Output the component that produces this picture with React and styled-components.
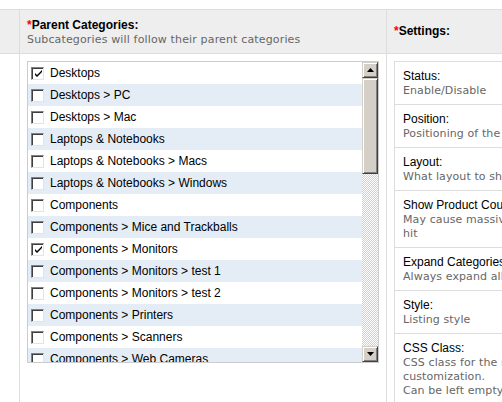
import React from 'react'
import { styled, createGlobalStyle } from 'styled-components'

const GlobalStyle = createGlobalStyle`
  html, body {
    margin: 0;
    padding: 0;
    background: #fff;
    overflow: hidden;
  }
  body {
    font-family: "Liberation Sans", Arial, sans-serif;
    font-size: 12px;
    color: #000;
  }
`

const categories = [
  { name: 'Desktops', checked: true },
  { name: 'Desktops > PC' },
  { name: 'Desktops > Mac' },
  { name: 'Laptops & Notebooks' },
  { name: 'Laptops & Notebooks > Macs' },
  { name: 'Laptops & Notebooks > Windows' },
  { name: 'Components' },
  { name: 'Components > Mice and Trackballs' },
  { name: 'Components > Monitors', checked: true },
  { name: 'Components > Monitors > test 1' },
  { name: 'Components > Monitors > test 2' },
  { name: 'Components > Printers' },
  { name: 'Components > Scanners' },
  { name: 'Components > Web Cameras' },
]

const settings = [
  { label: 'Status:', help: ['Enable/Disable'] },
  { label: 'Position:', help: ['Positioning of the module'] },
  { label: 'Layout:', help: ['What layout to show the module on'] },
  { label: 'Show Product Count:', help: ['May cause massive performance', 'hit'] },
  { label: 'Expand Categories:', help: ['Always expand all categories'] },
  { label: 'Style:', help: ['Listing style'] },
  { label: 'CSS Class:', help: ['CSS class for the module', 'customization.', 'Can be left empty'] },
]

const App = () => {
  return (<>
    <GlobalStyle />
    <Page>
      <Table>
        <HeadCell />
        <HeadCell>
          <Title><Star>*</Star>Parent Categories:</Title>
          <Sub>Subcategories will follow their parent categories</Sub>
        </HeadCell>
        <HeadCell center>
          <Title><Star>*</Star>Settings:</Title>
        </HeadCell>

        <BodyCell />
        <BodyCell>
          <ListBox>
            <Rows>
              {categories.map((c, i) => (
                <Row key={c.name} odd={i % 2 === 1}>
                  <Check>
                    {c.checked && (
                      <svg width="9" height="9" viewBox="0 0 9 9">
                        <path d="M1 4 L3 6 L8 1 L8 3 L3 8 L1 6 Z" fill="#000" />
                      </svg>
                    )}
                  </Check>
                  <span>{c.name}</span>
                </Row>
              ))}
            </Rows>
            <ScrollBar>
              <ScrollButton>
                <svg width="7" height="4" viewBox="0 0 7 4"><path d="M3.5 0 L7 4 L0 4 Z" fill="#000" /></svg>
              </ScrollButton>
              <Thumb />
              <Track />
              <ScrollButton>
                <svg width="7" height="4" viewBox="0 0 7 4"><path d="M0 0 L7 0 L3.5 4 Z" fill="#000" /></svg>
              </ScrollButton>
            </ScrollBar>
          </ListBox>
        </BodyCell>
        <BodyCell>
          <SettingsBox>
            {settings.map((s) => (
              <SettingRow key={s.label}>
                <Label>{s.label}</Label>
                {s.help.map((h) => <Help key={h}>{h}</Help>)}
              </SettingRow>
            ))}
          </SettingsBox>
        </BodyCell>
      </Table>
    </Page>
  </>)
}

const Page = styled.div`
  width: 502px;
  height: 402px;
  padding-top: 9px;
  box-sizing: border-box;
  overflow: hidden;
`

const Table = styled.div`
  display: grid;
  grid-template-columns: 20px 367px 200px;
  grid-template-rows: 44px 360px;
  border-top: 1px solid #ddd;
  width: 600px;
`

const HeadCell = styled.div`
  background: #eee;
  border-right: 1px solid #ddd;
  border-bottom: 1px solid #ddd;
  padding: 7px 7px 0;
  display: flex;
  flex-direction: column;
  justify-content: ${(p) => (p.center ? 'center' : 'flex-start')};
  ${(p) => p.center && 'padding-top: 0; padding-bottom: 2px;'}
  &:first-child { padding: 0; }
`

const Title = styled.div`
  font-weight: bold;
  font-size: 12px;
  line-height: 16px;
  color: #000;
`

const Star = styled.span`
  color: #f00;
  font-weight: bold;
`

const Sub = styled.div`
  font-family: "DejaVu Sans", Verdana, sans-serif;
  font-size: 11px;
  line-height: 14px;
  letter-spacing: 0.15px;
  color: #666;
`

const BodyCell = styled.div`
  border-right: 1px solid #ddd;
  padding: 7px 7px 0;
  &:nth-child(4) { padding: 0; }
`

const ListBox = styled.div`
  width: 352px;
  height: 302px;
  box-sizing: border-box;
  border: 1px solid #ccc;
  display: flex;
  background: #fff;
`

const Rows = styled.div`
  flex: 1;
  overflow: hidden;
`

const Row = styled.div`
  height: 22px;
  display: flex;
  align-items: center;
  background: ${(p) => (p.odd ? '#e4edf6' : '#fff')};
  font-size: 12px;
  color: #000;
  white-space: nowrap;
`

const Check = styled.div`
  width: 13px;
  height: 13px;
  box-sizing: border-box;
  margin: 0 6px 0 3px;
  background: #fff;
  border-top: 1px solid #808080;
  border-left: 1px solid #808080;
  border-right: 1px solid #e6e4de;
  border-bottom: 1px solid #e6e4de;
  box-shadow: inset 1px 1px 0 #404040;
  display: flex;
  align-items: center;
  justify-content: center;
  padding: 1px 0 0 1px;
`

const ScrollBar = styled.div`
  width: 16px;
  display: flex;
  flex-direction: column;
`

const Raised = styled.div`
  box-sizing: border-box;
  background: #d4d0c8;
  border-top: 1px solid #d4d0c8;
  border-left: 1px solid #d4d0c8;
  border-right: 1px solid #404040;
  border-bottom: 1px solid #404040;
  box-shadow: inset 1px 1px 0 #fff, inset -1px -1px 0 #808080;
`

const ScrollButton = styled(Raised)`
  height: 16px;
  display: flex;
  align-items: center;
  justify-content: center;
`

const Thumb = styled(Raised)`
  height: 96px;
`

const Track = styled.div`
  flex: 1;
  background: repeating-conic-gradient(#d4d0c8 0 25%, #fff 0 50%) 0 0 / 2px 2px;
`

const SettingsBox = styled.div`
  border: 1px solid #ddd;
  border-bottom: none;
  width: 160px;
`

const SettingRow = styled.div`
  border-bottom: 1px solid #ddd;
  padding: 7px 8px 6px;
  white-space: nowrap;
`

const Label = styled.div`
  font-size: 12px;
  line-height: 15px;
  color: #000;
`

const Help = styled.div`
  font-family: "DejaVu Sans", Verdana, sans-serif;
  font-size: 11px;
  line-height: 14px;
  letter-spacing: 0.1px;
  color: #666;
`

export default App
